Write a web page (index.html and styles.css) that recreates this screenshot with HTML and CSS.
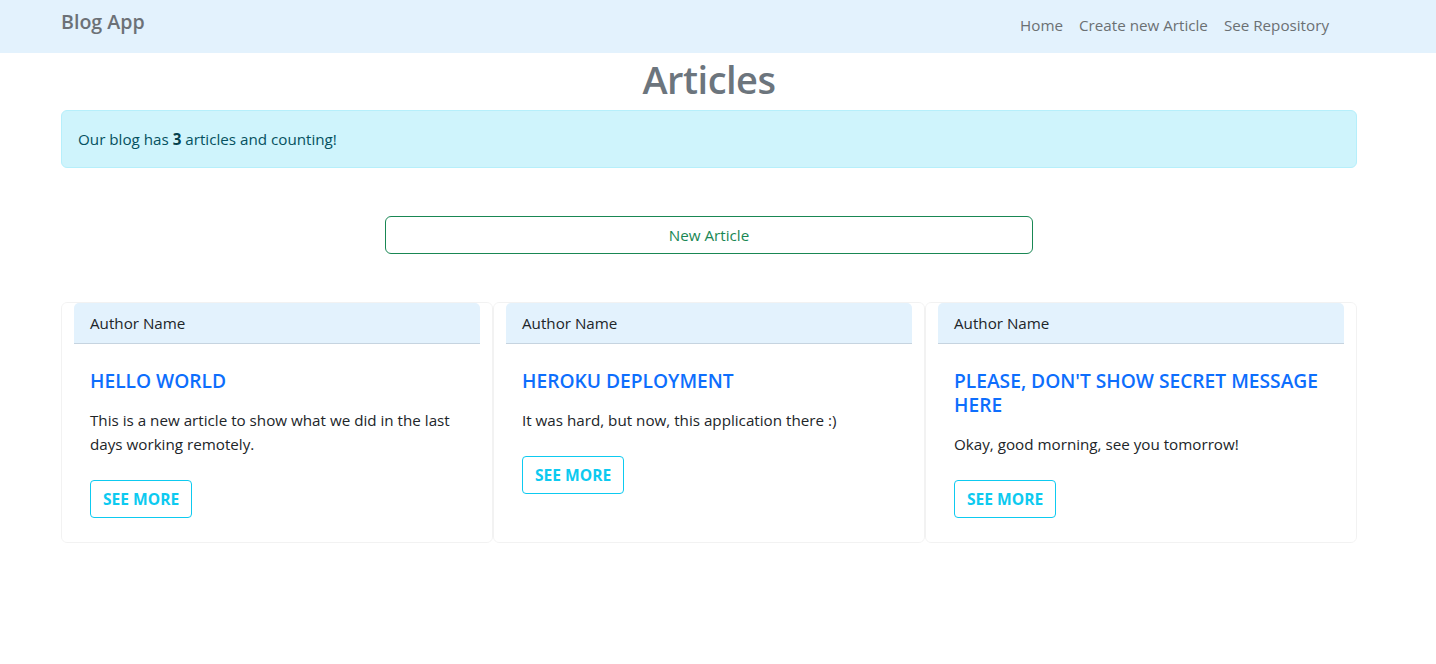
FILE: index.html
```html
<!DOCTYPE html>
<html lang="en">
<head>
<meta charset="utf-8">
<title>Blog App</title>
<link rel="stylesheet" href="styles.css">
</head>
<body>
<nav class="navbar">
  <div class="container nav-inner">
    <a class="brand" href="#">Blog App</a>
    <ul class="nav-links">
      <li><a href="#">Home</a></li>
      <li><a href="#">Create new Article</a></li>
      <li><a href="#">See Repository</a></li>
    </ul>
  </div>
</nav>
<main class="container">
  <h1 class="page-title">Articles</h1>
  <div class="alert">Our blog has <strong>3</strong> articles and counting!</div>
  <div class="new-wrap">
    <a class="btn-new" href="#">New Article</a>
  </div>
  <div class="cards">
    <div class="card">
      <div class="card-header">Author Name</div>
      <div class="card-body">
        <h5 class="card-title">HELLO WORLD</h5>
        <p class="card-text">This is a new article to show what we did in the last days working remotely.</p>
        <a class="btn-more" href="#">SEE MORE</a>
      </div>
    </div>
    <div class="card">
      <div class="card-header">Author Name</div>
      <div class="card-body">
        <h5 class="card-title">HEROKU DEPLOYMENT</h5>
        <p class="card-text">It was hard, but now, this application there :)</p>
        <a class="btn-more" href="#">SEE MORE</a>
      </div>
    </div>
    <div class="card">
      <div class="card-header">Author Name</div>
      <div class="card-body">
        <h5 class="card-title">PLEASE, DON'T SHOW SECRET MESSAGE HERE</h5>
        <p class="card-text">Okay, good morning, see you tomorrow!</p>
        <a class="btn-more" href="#">SEE MORE</a>
      </div>
    </div>
  </div>
</main>
</body>
</html>
```
FILE: styles.css
```css
* { box-sizing: border-box; }
html, body { margin: 0; }
body {
  font-family: "Open Sans", "Noto Sans", sans-serif;
  font-size: 15.2px;
  line-height: 24px;
  color: #212529;
  background: #fff;
  padding-right: 18px;
}
a { text-decoration: none; }
.container {
  max-width: 1320px;
  margin: 0 auto;
  padding: 0 12px;
}
.navbar {
  background: #e3f2fd;
  height: 53px;
  margin-right: -18px;
  padding-right: 18px;
}
.nav-inner {
  display: flex;
  justify-content: space-between;
  align-items: flex-start;
  height: 53px;
}
.brand {
  font-size: 19.6px;
  font-weight: 600;
  line-height: 30px;
  padding-top: 7px;
  color: #6c7177;
}
.nav-links {
  list-style: none;
  display: flex;
  margin: 0 20px 0 0;
  padding: 13px 0 0;
}
.nav-links a {
  display: block;
  padding: 0 8px;
  color: #6b7073;
}
.page-title {
  margin: 2px 0 7px;
  text-align: center;
  font-size: 38px;
  letter-spacing: -0.5px;
  line-height: 48px;
  font-weight: 600;
  color: #6c757d;
}
.alert {
  background: #cff4fc;
  border: 1px solid #b6effb;
  border-radius: 6px;
  padding: 16px;
  color: #055160;
}
.alert strong { font-weight: 700; color: #04414d; }
.new-wrap {
  display: flex;
  justify-content: center;
  margin: 48px 0;
}
.btn-new {
  width: 648px;
  border: 1px solid #198754;
  border-radius: 6px;
  padding: 6px 12px;
  text-align: center;
  color: #198754;
}
.cards {
  display: grid;
  grid-template-columns: repeat(3, 1fr);
}
.card {
  border: 1px solid rgba(0, 0, 0, 0.05);
  border-radius: 6px;
  padding: 0 12px;
  display: flex;
  flex-direction: column;
}
.card-header {
  background: #e3f2fd;
  border-bottom: 1px solid #c6d4e0;
  border-radius: 5px 5px 0 0;
  padding: 8px 16px;
  height: 41px;
}
.card-body {
  padding: 25px 16px 24px;
}
.card-title {
  margin: 0 0 15px;
  font-size: 19.2px;
  line-height: 24px;
  font-weight: 600;
  color: #0d6efd;
}
.card-text {
  margin: 0 0 24px;
}
.btn-more {
  display: inline-block;
  border: 1px solid #0dcaf0;
  border-radius: 4px;
  padding: 6px 12px;
  font-size: 15.6px;
  font-weight: 700;
  color: #0dcaf0;
}
```
